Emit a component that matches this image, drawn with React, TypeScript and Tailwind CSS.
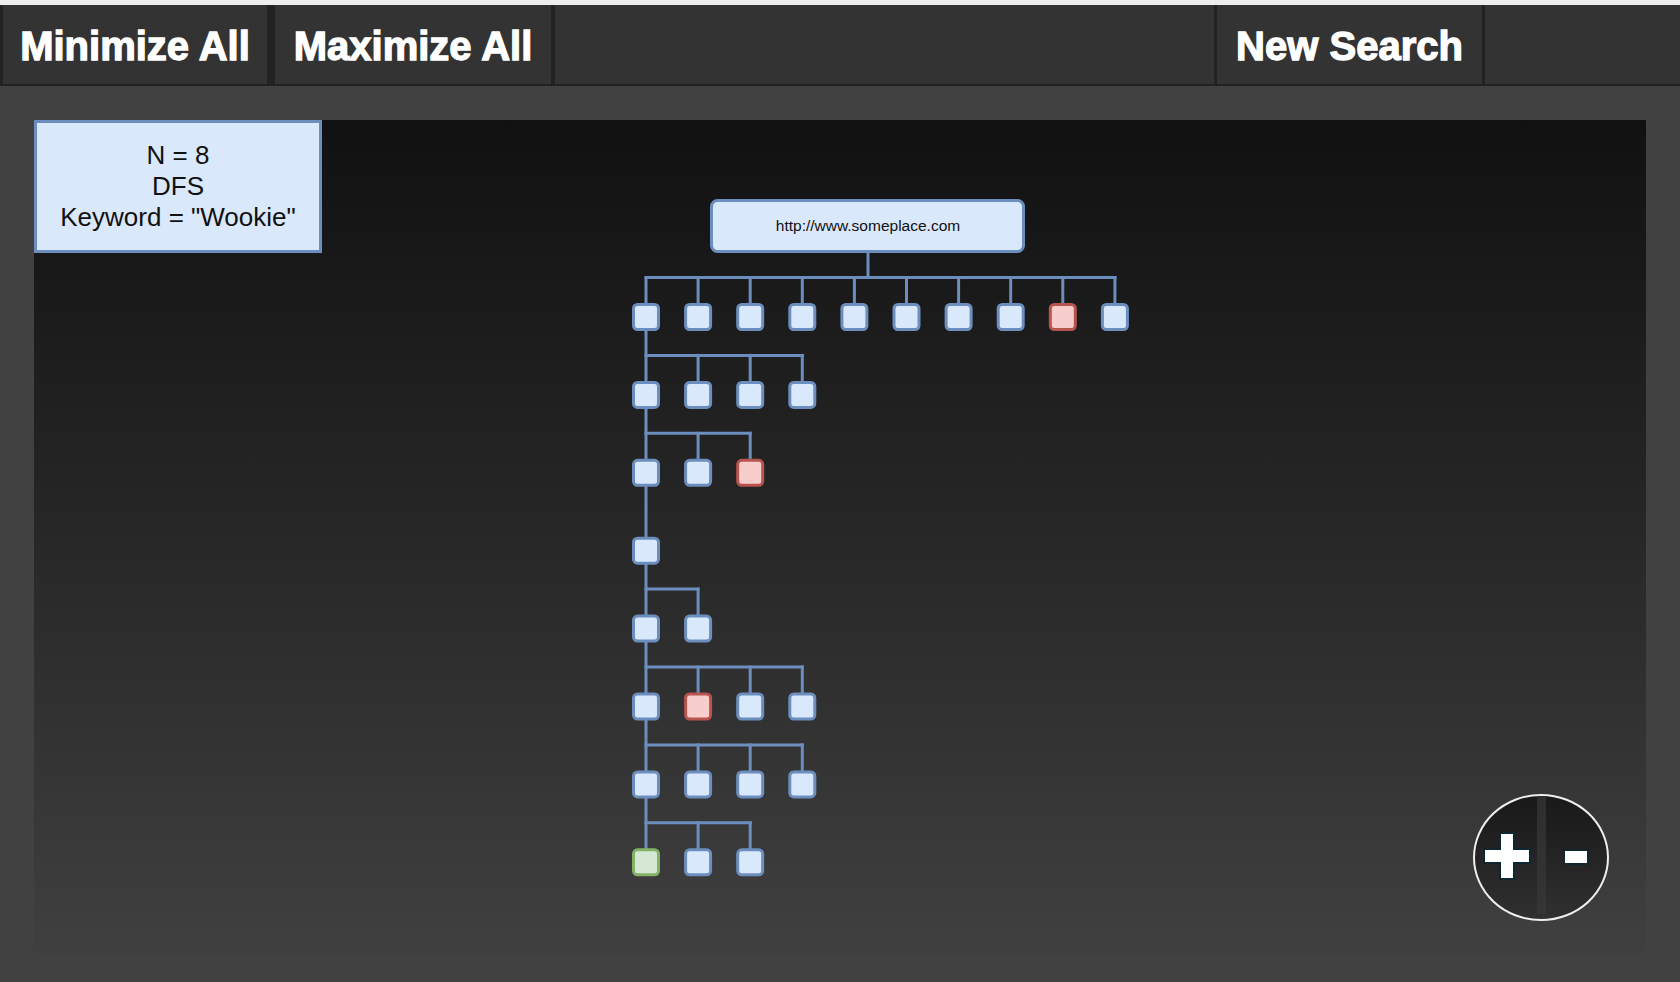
const ROW_X0 = 612
const COL_STEP = 52.1
const ROW_Y0 = 197
const ROW_STEP = 77.9
const BUS_OFFSET = 39.5

type Kind = "blue" | "red" | "green"

// children per depth, with the odd-coloured node index
const rows: { count: number; marks?: Record<number, Kind> }[] = [
    { count: 10, marks: { 8: "red" } },
    { count: 4 },
    { count: 3, marks: { 2: "red" } },
    { count: 1 },
    { count: 2 },
    { count: 4, marks: { 1: "red" } },
    { count: 4 },
    { count: 3, marks: { 0: "green" } },
]

const palette: Record<Kind, { fill: string; stroke: string }> = {
    blue: { fill: "#dae8fc", stroke: "#6c8ebf" },
    red: { fill: "#f8cecc", stroke: "#b85450" },
    green: { fill: "#d5e8d4", stroke: "#82b366" },
}

const Tree = () => {
    const lines: JSX.Element[] = []
    const nodes: JSX.Element[] = []
    const lastY = ROW_Y0 + ROW_STEP * (rows.length - 1)

    // root stem
    lines.push(<line key="stem" x1={834} y1={133} x2={834} y2={ROW_Y0 - BUS_OFFSET} />)
    // trunk down the first column
    lines.push(<line key="trunk" x1={ROW_X0} y1={ROW_Y0} x2={ROW_X0} y2={lastY} />)

    rows.forEach((row, j) => {
        const cy = ROW_Y0 + ROW_STEP * j
        const busY = cy - BUS_OFFSET
        const lastX = ROW_X0 + COL_STEP * (row.count - 1)
        if (row.count > 1) {
            lines.push(<line key={`bus-${j}`} x1={ROW_X0} y1={busY} x2={lastX} y2={busY} />)
        }
        for (let i = 0; i < row.count; i++) {
            const cx = ROW_X0 + COL_STEP * i
            if (i > 0 || j === 0) {
                lines.push(<line key={`v-${j}-${i}`} x1={cx} y1={busY} x2={cx} y2={cy} />)
            }
            const kind = row.marks?.[i] ?? "blue"
            nodes.push(
                <rect
                    key={`n-${j}-${i}`}
                    x={cx - 12.5}
                    y={cy - 12.5}
                    width={25}
                    height={25}
                    rx={4}
                    fill={palette[kind].fill}
                    stroke={palette[kind].stroke}
                    strokeWidth={3}
                />
            )
        }
    })

    return (
        <svg className="absolute left-0 top-0" width={1612} height={835}>
            <g stroke="#6c8ebf" strokeWidth={3} strokeLinecap="square">
                {lines}
            </g>
            <rect x={677.5} y={80.5} width={312} height={51} rx={6} fill="#dae8fc" stroke="#6c8ebf" strokeWidth={3} />
            <text
                x={834}
                y={111}
                textAnchor="middle"
                fontFamily="'Liberation Sans', Arial, sans-serif"
                fontSize={15.5}
                fill="#111"
            >
                http://www.someplace.com
            </text>
            {nodes}
        </svg>
    )
}

const ZoomControl = () => {
    return (
        <div className="absolute left-[1439px] top-[674px] w-[136px] h-[127px] rounded-[50%] border-2 border-[#eeeeee] bg-linear-to-b from-[#191919] to-[#303030] overflow-hidden">
            <div className="absolute left-[62px] top-0 w-[9px] h-[118px] bg-linear-to-b from-[#2e2e2e] to-[#353535]" />
            <svg className="absolute left-0 top-0" width={132} height={123}>
                <g fill="#ffffff" stroke="#0e2630" strokeWidth={4} paintOrder="stroke" strokeLinejoin="miter">
                    <path d="M10 54 H26 V38 H38 V54 H54 V66 H38 V82 H26 V66 H10 Z" />
                    <rect x={90} y={55} width={22} height={12} />
                </g>
            </svg>
        </div>
    )
}

const ToolButton = ({ label, width }: { label: string; width: string }) => (
    <div className={`h-full flex items-center justify-center pt-[3px] bg-[#333333] ${width}`}>
        <span className="text-[40px] font-bold text-white leading-none whitespace-nowrap [-webkit-text-stroke:1.3px_white]">
            {label}
        </span>
    </div>
)

export default function App() {
    return (
        <div className="w-[1680px] h-[982px] bg-[#414141] overflow-hidden font-['Liberation_Sans',Arial,sans-serif]">
            <div className="h-[5px] bg-[#eeeeee]" />

            <div className="h-[81px] flex bg-[#222222] pl-[3px] pb-[2px]">
                <ToolButton label="Minimize All" width="w-[264px]" />
                <div className="w-[8px]" />
                <ToolButton label="Maximize All" width="w-[276px]" />
                <div className="w-[4px]" />
                <div className="w-[659px] bg-[#333333]" />
                <div className="w-[3px]" />
                <ToolButton label="New Search" width="w-[265px]" />
                <div className="w-[3px]" />
                <div className="flex-1 bg-[#333333]" />
            </div>

            <div className="pl-[34px] pt-[34px]">
                <div className="relative w-[1612px] h-[835px] bg-linear-to-b from-[#111111] to-[#404040]">
                    <div className="absolute left-0 top-0 w-[288px] h-[133px] bg-[#dae8fc] border-[3px] border-[#6c8ebf] flex flex-col items-center justify-center text-[26px] leading-[31px] text-[#111111]">
                        <span>N = 8</span>
                        <span>DFS</span>
                        <span>Keyword = "Wookie"</span>
                    </div>
                    <Tree />
                    <ZoomControl />
                </div>
            </div>
        </div>
    )
}
